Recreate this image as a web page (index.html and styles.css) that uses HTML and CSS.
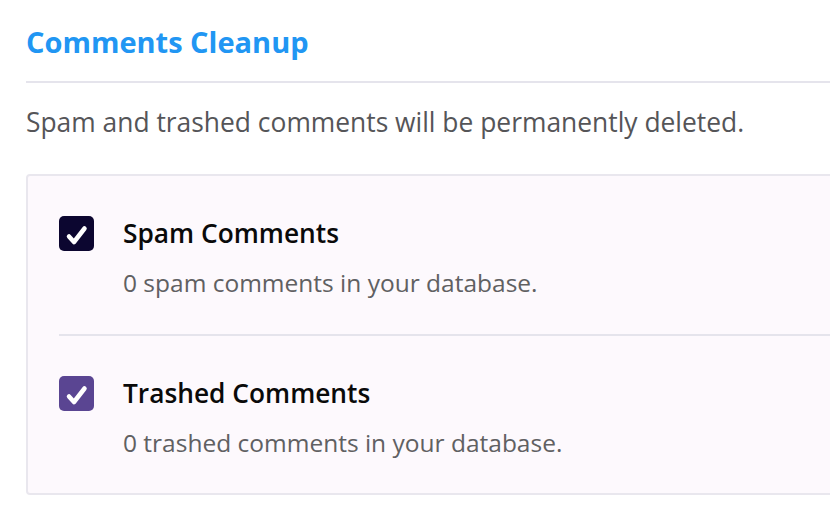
FILE: index.html
```html
<!DOCTYPE html>
<html>
<head>
<meta charset="utf-8">
<link rel="stylesheet" href="styles.css">
</head>
<body>
<div class="page">
  <h1 class="title">Comments Cleanup</h1>
  <p class="intro">Spam and trashed comments will be permanently deleted.</p>
  <div class="card">
    <div class="item">
      <span class="check check-dark">
        <svg viewBox="0 0 35 35" width="35" height="35"><path d="M10 20.5 L15 26 L25.5 12.5" fill="none" stroke="#fff" stroke-width="4.5" stroke-linecap="round" stroke-linejoin="round"/></svg>
      </span>
      <div class="item-text">
        <div class="item-title">Spam Comments</div>
        <div class="item-desc">0 spam comments in your database.</div>
      </div>
    </div>
    <div class="item last">
      <span class="check check-purple">
        <svg viewBox="0 0 35 35" width="35" height="35"><path d="M10 20.5 L15 26 L25.5 12.5" fill="none" stroke="#fff" stroke-width="4.5" stroke-linecap="round" stroke-linejoin="round"/></svg>
      </span>
      <div class="item-text">
        <div class="item-title">Trashed Comments</div>
        <div class="item-desc">0 trashed comments in your database.</div>
      </div>
    </div>
  </div>
</div>
</body>
</html>
```
FILE: styles.css
```css
html, body {
  margin: 0;
  padding: 0;
  background: #ffffff;
  overflow: hidden;
}
body {
  font-family: "Open Sans", "Noto Sans", sans-serif;
}
.page {
  padding-left: 26px;
  width: 1000px;
}
.title {
  margin: 22px 0 0 0;
  font-size: 29px;
  line-height: 40px;
  font-weight: 700;
  color: #2196f3;
  padding-bottom: 19px;
  border-bottom: 2px solid #e5e4ec;
}
.intro {
  margin: 21px 0 0 0;
  font-size: 26.4px;
  line-height: 36px;
  color: #555558;
}
.card {
  margin-top: 34px;
  border: 2px solid #e9e7ee;
  border-radius: 4px;
  background: #fdf9fd;
  padding-left: 31px;
}
.item {
  display: flex;
  align-items: flex-start;
  gap: 29px;
  padding: 40px 0 33px 0;
  border-bottom: 2px solid #e5e4ec;
}
.item.last {
  border-bottom: none;
  padding-bottom: 32px;
}
.check {
  flex: none;
  width: 35px;
  height: 35px;
  border-radius: 5px;
  display: block;
}
.check svg {
  display: block;
}
.check-dark {
  background: #0c0630;
}
.check-purple {
  background: #5a4592;
}
.item-text {
  margin-top: -1px;
}
.item-title {
  font-size: 26.3px;
  line-height: 36px;
  font-weight: 600;
  color: #0a0a0a;
}
.item-desc {
  margin-top: 14px;
  font-size: 24.5px;
  line-height: 36px;
  color: #606062;
}
```
